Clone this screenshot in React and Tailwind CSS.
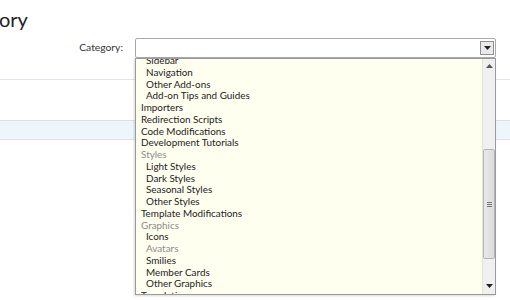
const items = [
  { t: "Sidebar", sub: true },
  { t: "Navigation", sub: true },
  { t: "Other Add-ons", sub: true },
  { t: "Add-on Tips and Guides", sub: true },
  { t: "Importers" },
  { t: "Redirection Scripts" },
  { t: "Code Modifications" },
  { t: "Development Tutorials" },
  { t: "Styles", muted: true },
  { t: "Light Styles", sub: true },
  { t: "Dark Styles", sub: true },
  { t: "Seasonal Styles", sub: true },
  { t: "Other Styles", sub: true },
  { t: "Template Modifications" },
  { t: "Graphics", muted: true },
  { t: "Icons", sub: true },
  { t: "Avatars", sub: true, muted: true },
  { t: "Smilies", sub: true },
  { t: "Member Cards", sub: true },
  { t: "Other Graphics", sub: true },
  { t: "Translations" },
];

function Arrow({ down = true }) {
  return (
    <svg width="7" height="4" viewBox="0 0 7 4">
      {down ? <path d="M0 0h7L3.5 4z" fill="#222" /> : <path d="M0 4h7L3.5 0z" fill="#555" />}
    </svg>
  );
}

export default function App() {
  return (
    <div className="relative w-[510px] h-[300px] overflow-hidden bg-white font-['Lato',sans-serif] text-[#333]">
      {/* title */}
      <div className="h-[38px] pt-[7px] text-[20px] leading-[24px] text-[#222] font-['Lato',sans-serif] -ml-[1px]">ory</div>

      {/* form row */}
      <div className="flex items-center h-[20px]">
        <label className="w-[123px] text-right text-[10.3px] text-[#333]">Category:</label>
        <div className="ml-[12px] w-[361px] h-[20px] border border-[#a9a9a9] bg-white rounded-[2px] flex items-center justify-end pr-[1px]">
          <div className="w-[14px] h-[14px] border border-[#8f8f8f] bg-[#eaeaea] flex items-center justify-center">
            <Arrow />
          </div>
        </div>
      </div>

      <div className="mt-[21px] border-b border-[#dfe6ed]"></div>
      <div className="mt-[40px] h-[20px] border-y border-[#d5e1ec] bg-[#eef5fb]"></div>

      {/* open listbox */}
      <div className="absolute left-[135px] top-[58px] w-[361px] h-[237px] border border-[#9a9a9a] bg-[#fffff0] flex shadow-[-1px_1px_2px_rgba(0,0,0,0.15)]">
        <div className="flex-1 overflow-hidden">
          <div className="-mt-[4px] pl-[5px] text-[9.9px] leading-[11.75px] text-[#222]">
            {items.map((it) => (
              <div key={it.t} className={`${it.sub ? "pl-[5px]" : ""} ${it.muted ? "text-[#8a8a8a]" : ""}`}>
                {it.t}
              </div>
            ))}
          </div>
        </div>
        <div className="w-[13px] flex flex-col bg-[#f0f0f0] border-l border-[#e3e3e3]">
          <div className="h-[14px] flex items-center justify-center"><Arrow down={false} /></div>
          <div className="h-[76px]"></div>
          <div className="h-[110px] border border-[#b5b5b5] rounded-[2px] bg-gradient-to-r from-[#e9e9e9] to-[#dcdcdc] flex items-center justify-center">
            <div className="flex flex-col gap-[1px]">
              <div className="w-[5px] h-px bg-[#777]"></div>
              <div className="w-[5px] h-px bg-[#777]"></div>
              <div className="w-[5px] h-px bg-[#777]"></div>
            </div>
          </div>
          <div className="flex-1 flex items-end justify-center pb-[6px]"><Arrow /></div>
        </div>
      </div>
    </div>
  );
}
